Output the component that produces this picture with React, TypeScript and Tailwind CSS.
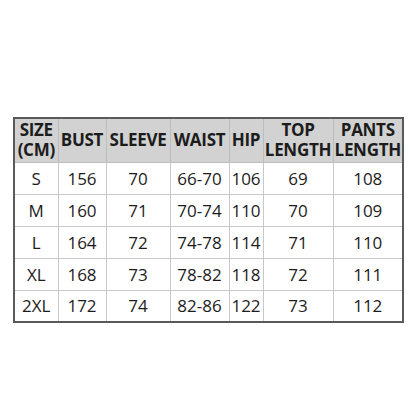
import React from "react";

const headers = [
  ["SIZE", "(CM)"],
  ["BUST"],
  ["SLEEVE"],
  ["WAIST"],
  ["HIP"],
  ["TOP", "LENGTH"],
  ["PANTS", "LENGTH"],
];
const widths = [44, 48, 64, 59, 34, 70, 70];
const rows = [
  ["S", "156", "70", "66-70", "106", "69", "108"],
  ["M", "160", "71", "70-74", "110", "70", "109"],
  ["L", "164", "72", "74-78", "114", "71", "110"],
  ["XL", "168", "73", "78-82", "118", "72", "111"],
  ["2XL", "172", "74", "82-86", "122", "73", "112"],
];

export default function App() {
  return (
    <div
      className="w-[416px] h-[416px] bg-white pt-[117px] pl-[13px]"
      style={{ fontFamily: '"Open Sans", "Noto Sans", sans-serif' }}
    >
      <table className="border-collapse border-2 border-[#5a5a5a] text-[#1c1c1c] table-fixed w-[391px]">
        <colgroup>
          {widths.map((w, i) => (
            <col key={i} style={{ width: w }} />
          ))}
        </colgroup>
        <thead>
          <tr className="h-[44px] bg-[#d2d2d2]">
            {headers.map((h, i) => (
              <th
                key={i}
                className="border border-[#bdbdbd] p-0 text-center align-middle text-[17px] font-bold leading-[20px] tracking-[-0.3px] whitespace-nowrap"
              >
                {h.length === 2 ? (
                  <>
                    {h[0]}
                    <br />
                    {h[1]}
                  </>
                ) : (
                  h[0]
                )}
              </th>
            ))}
          </tr>
        </thead>
        <tbody>
          {rows.map((r, i) => (
            <tr key={i} className="h-[32px]">
              {r.map((c, j) => (
                <td
                  key={j}
                  className="border border-[#c8c8c8] p-0 text-center align-middle text-[17px] leading-none"
                >
                  {c}
                </td>
              ))}
            </tr>
          ))}
        </tbody>
      </table>
    </div>
  );
}
